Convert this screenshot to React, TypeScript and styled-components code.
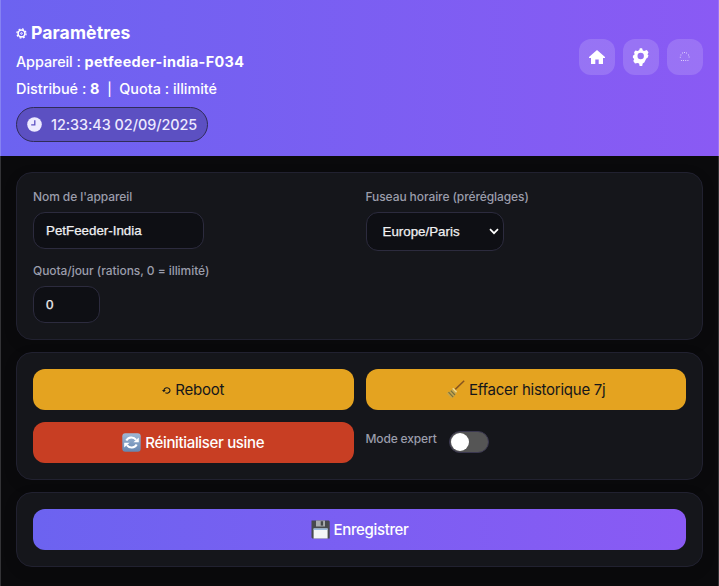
import React from "react";
import styled, { createGlobalStyle } from "styled-components";

const Global = createGlobalStyle`
  * { box-sizing: border-box; }
  body { margin: 0; background: #0a0a0c; overflow: hidden; font-family: Inter, "Liberation Sans", sans-serif; }
`;

const Page = styled.div`
  height: 586px;
  background: #0a0a0c;
  border-left: 1px solid #333336;
  border-right: 1px solid #333336;
`;

const Header = styled.header`
  height: 156px;
  margin: 0 -1px;
  padding: 21px 16px 0;
  display: flex;
  justify-content: space-between;
  color: #fff;
  background: linear-gradient(90deg, #6c63f0, #8a5af4);
  border-left: 1px solid #8682f2;
  border-right: 1px solid #9a72f7;
`;

const Info = styled.div`
  display: flex;
  flex-direction: column;
  align-items: flex-start;
  margin-left: -1px;
`;

const Text = styled.span<{ $size: number; $track?: number; $weight?: number }>`
  font-size: ${(p) => p.$size}px;
  letter-spacing: ${(p) => p.$track ?? 0}px;
  font-weight: ${(p) => p.$weight ?? 400};
  white-space: pre;
`;

const Title = styled.h1`
  display: flex;
  align-items: center;
  gap: 4px;
  height: 24px;
  margin: 0 0 3px;
  line-height: 24px;
`;

const Line = styled.div`
  height: 27px;
  line-height: 27px;
  white-space: pre;
`;

const Clock = styled.div`
  display: flex;
  align-items: center;
  gap: 9px;
  width: 192px;
  height: 35px;
  margin-top: 5px;
  padding-left: 10px;
  border: 1px solid #302c57;
  border-radius: 18px;
  background: #5c50c2;
  color: #edeaff;
`;

const Nav = styled.nav`
  display: flex;
  gap: 8px;
  margin: 18px -1px 0 0;
`;

const NavButton = styled.button`
  display: grid;
  place-items: center;
  width: 36px;
  height: 36px;
  padding: 0;
  border: 0;
  border-radius: 12px;
  color: #fff;
  background: rgba(255, 255, 255, 0.15);
`;

const Main = styled.main`
  display: grid;
  gap: 12px;
  padding: 16px 15px;
`;

const Card = styled.section`
  display: grid;
  grid-template-columns: 1fr 1fr;
  gap: 12px;
  padding: 16px;
  border: 1px solid #212130;
  border-radius: 16px;
  background: #15161b;
  box-shadow: 0 4px 14px rgba(0, 0, 0, 0.12);
`;

const Field = styled.div`
  display: flex;
  flex-direction: column;
  align-items: flex-start;
`;

const Label = styled.label`
  height: 15px;
  margin-bottom: 8px;
  line-height: 13px;
  color: #9b9dab;
`;

const Control = styled.div<{ $w: number; $h?: number; $pad?: number }>`
  display: flex;
  align-items: center;
  justify-content: space-between;
  width: ${(p) => p.$w}px;
  height: ${(p) => p.$h ?? 37}px;
  padding: 0 4px 0 ${(p) => p.$pad ?? 12}px;
  border: 1px solid #2c2b3e;
  border-radius: 12px;
  background: #0e0f14;
  color: #f0f0f2;
  font-family: "Liberation Sans", Arial, sans-serif;
  -webkit-text-stroke: 0.25px #f0f0f2;
`;

const Action = styled.button<{ $tone: "warn" | "danger" | "primary" }>`
  display: flex;
  align-items: center;
  justify-content: center;
  gap: 4px;
  height: 41px;
  padding: 0;
  border: 0;
  border-radius: 12px;
  font-family: inherit;
  color: ${(p) => (p.$tone === "warn" ? "#15161b" : "#fff")};
  background: ${(p) =>
    ({
      warn: "#e4a320",
      danger: "#c83e23",
      primary: "linear-gradient(90deg, #6c63f0, #8a5af4)",
    })[p.$tone]};
  ${(p) => p.$tone === "primary" && "grid-column: 1 / -1;"}
`;

const Expert = styled.div`
  display: flex;
  gap: 12px;
  padding-top: 9px;
`;

const Switch = styled.div`
  width: 40px;
  height: 22px;
  padding: 1px;
  border: 1px solid #3b3850;
  border-radius: 11px;
  background: #555;
`;

const Knob = styled.div`
  width: 18px;
  height: 18px;
  border-radius: 50%;
  background: #fff;
`;

const SmallGear = () => (
  <svg width="11" height="12" viewBox="0 0 12 12" fill="none" stroke="#fff">
    <circle cx="6" cy="6.5" r="3.7" strokeWidth="1.7" />
    <circle cx="6" cy="6.5" r="5" strokeWidth="1.4" strokeDasharray="2 1.93" />
    <circle cx="6" cy="6.5" r=".9" strokeWidth="1" />
  </svg>
);

const ClockIcon = () => (
  <svg width="15" height="15" viewBox="0 0 15 15">
    <circle cx="7.5" cy="7.5" r="7.3" fill="#edeaff" />
    <path d="M7.8 3.2v4.7H4.2" fill="none" stroke="#5c50c2" strokeWidth="1.3" />
  </svg>
);

const Home = () => (
  <svg width="16" height="14" viewBox="0 0 16 14" fill="#fff">
    <path d="M8 0 16 7.1v.9h-2v6H9.7V9.6H6.3V14H2V8H0v-.9z" />
  </svg>
);

const Gear = () => (
  <svg width="18" height="20" viewBox="0 0 18 20" fill="#fff" fillRule="evenodd">
    <path d="M7.8 1.2h2.3l.6 2.1 1.3.7 2.8-.9 1.7 2.1-1 2.4 1 .9-.9 2.3-1.3.8-2 4-1.6 1-.5 2.5H7.6l-.5-2.5-1.7-.7-2.4.5-1.7-2.3.9-2.2L.9 10.8V8.7L2.6 7.6 2.1 5.2 3.4 3.4l2.4.5 1.5-.8zM8.7 5.8a3.2 3.2 0 1 0 0 6.4 3.2 3.2 0 0 0 0-6.4z" />
  </svg>
);

const Dots = () => (
  <svg width="12" height="12" viewBox="0 0 12 12" fill="#fff" fillOpacity=".65">
    <path d="M5 1h1v1H5zM7 1.6h1v1H7zM3 1.6h1v1H3zM9 3.4h1v1H9zM1.4 3.6h1v1h-1zM9.6 5.6h1v1h-1zM.8 5.8h1v1h-1zM2 9h1v1H2zM4 9h1v1H4zM6.2 9h1v1h-1zM8.4 9h1v1h-1z" />
  </svg>
);

const Chevron = () => (
  <svg width="10" height="7" viewBox="0 0 10 7" fill="none" stroke="#fff" strokeWidth="1.7">
    <path d="M1 1.2 5 5.2 9 1.2" />
  </svg>
);

const RebootIcon = () => (
  <svg width="9" height="8" viewBox="0 0 9 8" fill="none" stroke="#15161b">
    <path d="M2 5A3 2.7 0 1 1 3.4 6.8" strokeWidth="1.1" />
    <path d="M0 4h3.8L1.9 6.2z" fill="#15161b" stroke="none" />
  </svg>
);

const Broom = () => (
  <svg width="19" height="19" viewBox="0 0 19 19">
    <path d="M9.2 9.4 18.2.8" stroke="#87551f" strokeWidth="1.5" />
    <path d="M7 8.6 10.5 12C9.6 15 8 17.5 5.5 18.2L.5 13.3C2 12.5 4.5 11.5 7 8.6z" fill="#c9a64b" />
    <path d="M4.8 10.6 9 15M2.5 12.2l4.7 4.9" stroke="#77703e" strokeWidth="1.2" />
    <path d="m6.8 8.3 3.8 3.8" stroke="#eed88c" strokeWidth="1.5" />
  </svg>
);

const Refresh = () => (
  <svg width="19" height="19" viewBox="0 0 19 19">
    <defs>
      <linearGradient id="tile" x2="0" y2="1">
        <stop stopColor="#9fb8d5" />
        <stop offset="1" stopColor="#6686b0" />
      </linearGradient>
    </defs>
    <rect x=".3" y=".3" width="18.4" height="18.4" rx="3" fill="url(#tile)" />
    <g fill="none" stroke="#fff" strokeWidth="2.1">
      <path d="M4.3 7.6a5.8 5.8 0 0 1 9.8-.8M14.7 11.4a5.8 5.8 0 0 1-9.8.8" />
    </g>
    <path d="M11.4 9.2h5.4V4.4zM7.6 9.8H2.2v4.8z" fill="#fff" />
  </svg>
);

const Floppy = () => (
  <svg width="19" height="19" viewBox="0 0 19 19">
    <path d="M.5.5h17.3l.9.9v17.1H1.4l-.9-.9z" fill="#474a4d" />
    <path d="M5 .5h9v6H5z" fill="#a8abad" />
    <path d="M9.7 1.2h2.4v4.4H9.7z" fill="#45484b" />
    <path d="M2.6 8.5h14v10h-14z" fill="#f3f5f7" />
    <path d="M2.6 8.5h14v1.4h-14z" fill="#91b5da" />
  </svg>
);

export default function App() {
  return (
    <Page>
      <Global />
      <Header>
        <Info>
          <Title>
            <SmallGear />
            <Text $size={17.6} $weight={700} $track={0.1}>Paramètres</Text>
          </Title>
          <Line>
            <Text $size={14.4} $weight={500} $track={-0.08}>Appareil : </Text>
            <Text $size={14.4} $weight={700} $track={0.35}>petfeeder-india-F034</Text>
          </Line>
          <Line>
            <Text $size={14.4} $weight={500}>Distribué : </Text>
            <Text $size={14.4} $weight={700}>8</Text>
            <Text $size={14.4} $weight={500}>{"  "}</Text>
            <Text $size={13} $weight={500}>|</Text>
            <Text $size={14.4} $weight={500}>{"  Quota : illimité"}</Text>
          </Line>
          <Clock>
            <ClockIcon />
            <Text $size={14.4} $weight={500} $track={-0.04}>12:33:43 02/09/2025</Text>
          </Clock>
        </Info>
        <Nav>
          <NavButton><Home /></NavButton>
          <NavButton><Gear /></NavButton>
          <NavButton><Dots /></NavButton>
        </Nav>
      </Header>
      <Main>
        <Card>
          <Field>
            <Label><Text $size={12} $weight={500} $track={-0.09}>Nom de l'appareil</Text></Label>
            <Control $w={171}><Text $size={13.33}>PetFeeder-India</Text></Control>
          </Field>
          <Field>
            <Label><Text $size={12} $weight={500} $track={-0.09}>Fuseau horaire (préréglages)</Text></Label>
            <Control $w={138} $h={39} $pad={16}>
              <Text $size={13.33}>Europe/Paris</Text>
              <Chevron />
            </Control>
          </Field>
          <Field>
            <Label><Text $size={12} $weight={500} $track={-0.06}>Quota/jour (rations, 0 = illimité)</Text></Label>
            <Control $w={67}><Text $size={13.33}>0</Text></Control>
          </Field>
        </Card>
        <Card>
          <Action $tone="warn"><RebootIcon /><Text $size={15} $track={-0.2}>Reboot</Text></Action>
          <Action $tone="warn"><Broom /><Text $size={15} $track={-0.25}>Effacer historique 7j</Text></Action>
          <Action $tone="danger"><Refresh /><Text $size={15} $weight={500} $track={-0.34}>Réinitialiser usine</Text></Action>
          <Expert>
            <Label><Text $size={12} $weight={500} $track={-0.15}>Mode expert</Text></Label>
            <Switch><Knob /></Switch>
          </Expert>
        </Card>
        <Card>
          <Action $tone="primary"><Floppy /><Text $size={15} $weight={500} $track={-0.35}>Enregistrer</Text></Action>
        </Card>
      </Main>
    </Page>
  );
}
